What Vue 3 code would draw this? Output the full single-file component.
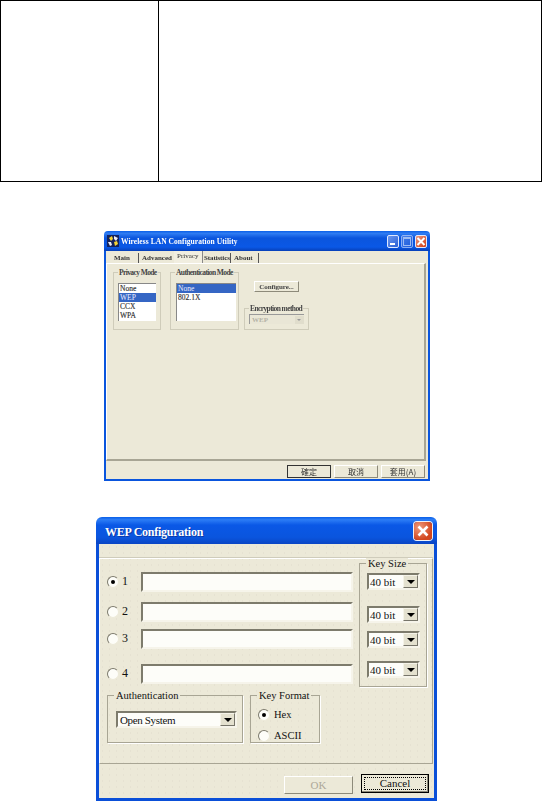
<script setup>
const privacyModes = [
  { label: 'None', on: false },
  { label: 'WEP', on: true },
  { label: 'CCX', on: false },
  { label: 'WPA', on: false }
]
const authModes = [
  { label: 'None', on: true },
  { label: '802.1X', on: false }
]
const keys = [
  { id: 1, on: true, cls: 'k1' },
  { id: 2, on: false, cls: 'k2' },
  { id: 3, on: false, cls: 'k3' },
  { id: 4, on: false, cls: 'k4' }
]
</script>

<template>
  <div class="page">
    <div class="doc-table">
      <div class="doc-cell left"></div>
      <div class="doc-cell"></div>
    </div>

    <section class="win win-a">
      <header class="title-a">
        <svg class="app-icon" viewBox="0 0 12 12" width="12" height="12">
          <rect width="12" height="12" fill="#12215c" />
          <path d="M2 3l3-2 1 3-2 2z" fill="#f2d335" />
          <path d="M7 1l4 2-2 3-2-2z" fill="#e9ecf6" />
          <path d="M1 7l3 0 1 3-2 1z" fill="#e9ecf6" />
          <path d="M7 7l3-1 1 3-3 2z" fill="#f2d335" />
        </svg>
        <span class="title-a-text">Wireless LAN Configuration Utility</span>
        <span class="ctl ctl-blue"><i class="min-mark"></i></span>
        <span class="ctl ctl-blue ctl-dim"><i class="max-mark"></i></span>
        <span class="ctl ctl-red">
          <svg viewBox="0 0 12 12" width="12" height="13"><path d="M2.5 2.5l7 7M9.5 2.5l-7 7" stroke="#fff" stroke-width="2" /></svg>
        </span>
      </header>
      <div class="body-a">
        <nav class="tabs">
          <span class="tab t-main">Main</span>
          <span class="tab t-adv">Advanced</span>
          <span class="tab t-priv">Privacy</span>
          <span class="tab t-stat">Statistics</span>
          <span class="tab t-about">About</span>
        </nav>
        <div class="panel-a">
          <div class="grp g-privacy">
            <span class="legend-a">Privacy Mode</span>
            <ul class="list list-p">
              <li v-for="m in privacyModes" :key="m.label" :class="{ sel: m.on }">{{ m.label }}</li>
            </ul>
          </div>
          <div class="grp g-auth">
            <span class="legend-a">Authentication Mode</span>
            <ul class="list list-a">
              <li v-for="m in authModes" :key="m.label" :class="{ sel: m.on }">{{ m.label }}</li>
            </ul>
          </div>
          <div class="col-conf">
            <button class="btn-a conf">Configure...</button>
            <div class="grp g-enc">
              <span class="legend-a">Encryption method</span>
              <div class="mini-select">
                <span>WEP</span>
                <i class="mini-arrow"></i>
              </div>
            </div>
          </div>
        </div>
        <footer class="foot-a">
          <button class="btn-a zh default">確定</button>
          <button class="btn-a zh">取消</button>
          <button class="btn-a zh">套用(A)</button>
        </footer>
      </div>
    </section>

    <section class="win win-b">
      <header class="title-b">
        <span class="title-b-text">WEP Configuration</span>
        <span class="close-b">
          <svg viewBox="0 0 18 18" width="18" height="18"><path d="M4.5 4.5l9 9M13.5 4.5l-9 9" stroke="#fff" stroke-width="2.6" /></svg>
        </span>
      </header>
      <div class="body-b">
        <div class="panel-b">
          <div class="top-b">
            <div class="key-rows">
              <div v-for="k in keys" :key="k.id" class="key-row" :class="k.cls">
                <span class="radio" :class="{ on: k.on }"></span>
                <span class="key-num">{{ k.id }}</span>
                <span class="field"></span>
              </div>
            </div>
            <div class="grp-b g-size">
              <span class="legend-b">Key Size</span>
              <div v-for="k in keys" :key="k.id" class="select s-small" :class="'s' + k.id">
                <span class="sel-text">40 bit</span>
                <i class="arrow-btn"><b></b></i>
              </div>
            </div>
          </div>
          <div class="bottom-b">
            <div class="grp-b g-authn">
              <span class="legend-b">Authentication</span>
              <div class="select s-wide">
                <span class="sel-text">Open System</span>
                <i class="arrow-btn"><b></b></i>
              </div>
            </div>
            <div class="grp-b g-format">
              <span class="legend-b">Key Format</span>
              <label class="fmt"><span class="radio on"></span>Hex</label>
              <label class="fmt fmt2"><span class="radio"></span>ASCII</label>
            </div>
          </div>
        </div>
        <footer class="foot-b">
          <button class="btn-b off">OK</button>
          <button class="btn-b focus"><span>Cancel</span></button>
        </footer>
      </div>
    </section>
  </div>
</template>

<style>
html, body { margin: 0; background: #fff; }
</style>

<style scoped>
.page {
  width: 542px;
  height: 802px;
  overflow: hidden;
  background: #fff;
  font-family: "Liberation Serif", serif;
  color: #111;
}
.doc-table {
  display: flex;
  box-sizing: border-box;
  width: 542px;
  height: 182px;
  border: 1px solid #000;
}
.doc-cell { flex: 1; }
.doc-cell.left { flex: 0 0 157px; border-right: 1px solid #000; }

.win { box-sizing: border-box; }
ul { list-style: none; margin: 0; padding: 0; }
button { padding: 0; margin: 0; font-family: inherit; }

/* first window */
.win-a {
  width: 326px;
  height: 250px;
  margin: 49px 0 0 104px;
  display: flex;
  flex-direction: column;
  filter: blur(0.35px);
  border-radius: 4px 4px 0 0;
  overflow: hidden;
}
.title-a {
  height: 20px;
  flex: none;
  display: flex;
  align-items: center;
  padding: 0 3px;
  background: linear-gradient(#0a5fe8 0, #2f7cf2 12%, #0b55dd 35%, #0a58e6 80%, #0740b8 100%);
}
.app-icon { margin-right: 2px; }
.title-a-text {
  flex: 1;
  color: #fff;
  font-weight: 700;
  font-size: 7.5px;
  letter-spacing: 0.06px;
}
.ctl {
  box-sizing: border-box;
  width: 12px;
  height: 13px;
  margin-left: 2px;
  border: 1px solid #dfe8ff;
  border-radius: 2px;
  display: flex;
  position: relative;
}
.ctl-blue { background: linear-gradient(135deg, #6c98ee, #2a5fd6); }
.ctl-dim { opacity: 0.6; }
.ctl-red { background: linear-gradient(135deg, #ec9a80, #cf3a14); align-items: center; justify-content: center; }
.ctl-red svg { margin: -1px; }
.min-mark { width: 5px; height: 2px; background: #fff; margin: 7px 0 0 2px; }
.max-mark { width: 6px; height: 6px; border: 1px solid #fff; border-top-width: 2px; margin: 1px 0 0 1px; }

.body-a {
  flex: 1;
  display: flex;
  flex-direction: column;
  background: #ece9d8;
  border: solid #0a55dd;
  border-width: 0 2px 2px;
}
.tabs {
  height: 12px;
  flex: none;
  display: flex;
  align-items: flex-end;
  font-size: 7px;
  font-weight: 700;
  color: #333;
}
.tab { display: block; box-sizing: border-box; height: 10px; line-height: 10px; white-space: nowrap; }
.t-main { margin-left: 8px; width: 25px; border-right: 1px solid #555; }
.t-adv { width: 35px; padding-left: 3px; }
.t-priv { width: 29px; padding-left: 3px; height: 12px; line-height: 11px; background: #f1eee0; border-right: 1px solid #888; font-weight: 400; }
.t-stat { width: 28px; padding-left: 1px; border-right: 1px solid #555; letter-spacing: -0.1px; }
.t-about { width: 28px; padding-left: 3px; border-right: 1px solid #555; }

.panel-a {
  box-sizing: border-box;
  height: 198px;
  flex: none;
  width: 320px;
  display: flex;
  align-items: flex-start;
  padding: 8px 0 0 6px;
  border-top: 1px solid #fff;
  border-right: 2px solid #a8a594;
  border-bottom: 2px solid #a8a594;
  border-left: 1px solid #fff;
}
.grp {
  box-sizing: border-box;
  border: 1px solid #cfccba;
  position: relative;
  height: 58px;
}
.legend-a {
  position: absolute;
  top: -5px;
  left: 4px;
  padding: 0 1px;
  background: #ece9d8;
  font-size: 7.5px;
  letter-spacing: -0.6px;
  line-height: 9px;
  font-weight: 700;
  color: #444;
  white-space: nowrap;
}
.g-privacy { width: 48px; }
.g-auth { width: 69px; margin-left: 9px; }
.list {
  box-sizing: border-box;
  position: absolute;
  top: 10px;
  background: #fff;
  border-top: 1px solid #888;
  border-left: 1px solid #888;
  height: 38px;
  font-size: 7.5px;
  line-height: 9px;
  color: #333;
  -webkit-text-stroke: 0.15px #333;
}
.list li { padding-left: 1px; height: 9px; }
.list-p { left: 4px; width: 38px; }
.list-a { left: 5px; width: 60px; }
.sel { background: #3566c4; color: #eef; -webkit-text-stroke: 0; }
.col-conf {
  display: flex;
  flex-direction: column;
  height: 58px;
  margin-left: 5px;
}
.btn-a {
  box-sizing: border-box;
  border: 1px solid;
  border-color: #fff #8d8a7a #8d8a7a #fff;
  background: #ece9d8;
  font-size: 7px;
  font-weight: 700;
  color: #444;
}
.conf { width: 45px; height: 11px; line-height: 8px; margin: 9px 0 0 10px; letter-spacing: -0.1px; }
.g-enc { width: 65px; height: 22px; margin-top: 16px; }
.mini-select {
  box-sizing: border-box;
  width: 55px;
  height: 10px;
  margin: 5px 0 0 4px;
  border-top: 1px solid #999;
  border-left: 1px solid #999;
  background: #e9e6d6;
  display: flex;
  justify-content: space-between;
  align-items: center;
  font-size: 7px;
  font-weight: 700;
  color: #b5b3a6;
  padding-left: 2px;
}
.mini-arrow {
  width: 9px;
  height: 8px;
  background: #e0ddcc;
  position: relative;
}
.mini-arrow::after {
  content: "";
  position: absolute;
  left: 2px;
  top: 3px;
  border: 2.5px solid transparent;
  border-top-color: #999;
  border-bottom-width: 0;
}
.foot-a {
  flex: 1;
  display: flex;
  align-items: flex-start;
  padding-top: 4px;
  padding-left: 181px;
}
.zh {
  width: 44px;
  height: 13px;
  margin-right: 3px;
  font-family: "Noto Sans CJK TC", sans-serif;
  font-size: 8px;
  line-height: 9px;
  font-weight: 400;
  color: #333;
}
.default { border: 1px solid #333; }

/* second window */
.win-b {
  width: 341px;
  height: 284px;
  margin: 36px 0 0 96px;
  display: flex;
  flex-direction: column;
  border-radius: 6px 6px 0 0;
  overflow: hidden;
}
.title-b {
  height: 27px;
  flex: none;
  display: flex;
  align-items: center;
  padding: 0 5px 0 9px;
  background: linear-gradient(#0a5fe8 0, #2c7df6 10%, #0a58e6 30%, #0a55de 75%, #0a45c4 100%);
}
.title-b-text {
  flex: 1;
  padding-top: 3px;
  color: #fff;
  font-weight: 700;
  font-size: 12px;
  letter-spacing: -0.25px;
  text-shadow: 1px 1px 0 #0a3aa8;
}
.close-b {
  width: 18px;
  height: 18px;
  border-radius: 3px;
  background: radial-gradient(circle at 30% 30%, #ee9a7c, #d3461e 70%);
  box-shadow: 0 0 0 1px #f1f1f4;
  display: block;
}
.close-b svg { display: block; }
.body-b {
  flex: 1;
  display: flex;
  flex-direction: column;
  background-color: #ece9d8;
  background-image: radial-gradient(circle, #e6e2d2 0.6px, transparent 0.8px);
  background-size: 7px 6px;
  border: solid #0a4fd8;
  border-width: 0 3px 3px;
  padding: 14px 0 0;
}
.panel-b {
  box-sizing: border-box;
  width: 334px;
  height: 206px;
  flex: none;
  border: 1px solid;
  border-color: #fff #a8a594 #a8a594 #fff;
  box-shadow: 0 -1px 0 #cfccbb;
}
.top-b {
  display: flex;
  align-items: flex-start;
  padding-top: 4px;
}
.key-rows { width: 253px; padding-top: 9px; flex: none; }
.key-row { display: flex; align-items: center; height: 20px; padding-left: 7px; }
.k2 { margin-top: 10px; }
.k3 { margin-top: 7px; }
.k4 { margin-top: 15px; }
.radio {
  box-sizing: border-box;
  width: 12px;
  height: 12px;
  flex: none;
  border-radius: 50%;
  background: #fdfdf8;
  border: 1px solid;
  border-color: #7c7a6c #ece9d8 #ece9d8 #7c7a6c;
  position: relative;
}
.radio.on::after {
  content: "";
  position: absolute;
  left: 3px;
  top: 3px;
  width: 4px;
  height: 4px;
  border-radius: 50%;
  background: #000;
}
.key-num { width: 22px; flex: none; padding-left: 3px; box-sizing: border-box; font-size: 12px; padding-bottom: 1px; }
.field {
  box-sizing: border-box;
  flex: none;
  width: 212px;
  height: 20px;
  background: #fdfdf9;
  border: 2px solid;
  border-color: #7d7b6c #f6f4ea #f6f4ea #7d7b6c;
}
.grp-b {
  box-sizing: border-box;
  border: 1px solid #a8a594;
  box-shadow: 1px 1px 0 #fff;
  position: relative;
}
.legend-b {
  position: absolute;
  top: -6px;
  left: 6px;
  padding: 0 2px;
  background: #ece9d8;
  font-size: 10.5px;
  line-height: 12px;
  white-space: nowrap;
}
.g-size { width: 68px; height: 124px; margin-left: 6px; }
.select {
  box-sizing: border-box;
  display: flex;
  align-items: center;
  justify-content: space-between;
  background: #fdfdf9;
  border: 2px solid;
  border-color: #7d7b6c #f6f4ea #f6f4ea #7d7b6c;
  padding-left: 1px;
}
.sel-text { font-size: 11px; padding-top: 1px; white-space: nowrap; }
.s-small { width: 53px; height: 17px; margin-left: 7px; }
.s1 { margin-top: 9px; }
.s2 { margin-top: 16px; }
.s3 { margin-top: 8px; }
.s4 { margin-top: 13px; }
.arrow-btn {
  box-sizing: border-box;
  width: 15px;
  height: 13px;
  flex: none;
  background: #e4e1cf;
  border: 1px solid;
  border-color: #f5f3e8 #77756a #77756a #f5f3e8;
  display: flex;
  align-items: center;
  justify-content: center;
}
.arrow-btn b {
  width: 0;
  height: 0;
  border: 4px solid transparent;
  border-top: 4px solid #000;
  border-bottom-width: 0;
}
.bottom-b {
  display: flex;
  padding: 8px 0 0 7px;
}
.g-authn { width: 136px; height: 48px; }
.s-wide { width: 121px; height: 17px; margin: 15px 0 0 8px; }
.s-wide .sel-text { letter-spacing: -0.35px; padding-left: 1px; }
.g-format { width: 70px; height: 48px; margin-left: 7px; }
.fmt {
  display: flex;
  align-items: center;
  height: 13px;
  font-size: 10.5px;
  padding: 12px 0 0 7px;
}
.fmt .radio { margin-right: 4px; }
.fmt2 { padding-top: 8px; }
.foot-b {
  flex: 1;
  display: flex;
  align-items: flex-start;
  padding: 10px 0 0 185px;
}
.btn-b {
  box-sizing: border-box;
  height: 18px;
  font-size: 11px;
  background: #ece9d8;
}
.off {
  width: 69px;
  margin-top: 2px;
  border: 1px solid;
  border-color: #fff #8d8a7a #8d8a7a #fff;
  color: #aca899;
}
.focus {
  width: 68px;
  height: 19px;
  margin-left: 8px;
  border: 1px solid #000;
  box-shadow: inset -1px -1px 0 #8d8a7a;
  padding: 2px;
  color: #111;
}
.focus span {
  display: block;
  box-sizing: border-box;
  height: 13px;
  line-height: 11px;
  border: 1px dotted #000;
}
</style>
